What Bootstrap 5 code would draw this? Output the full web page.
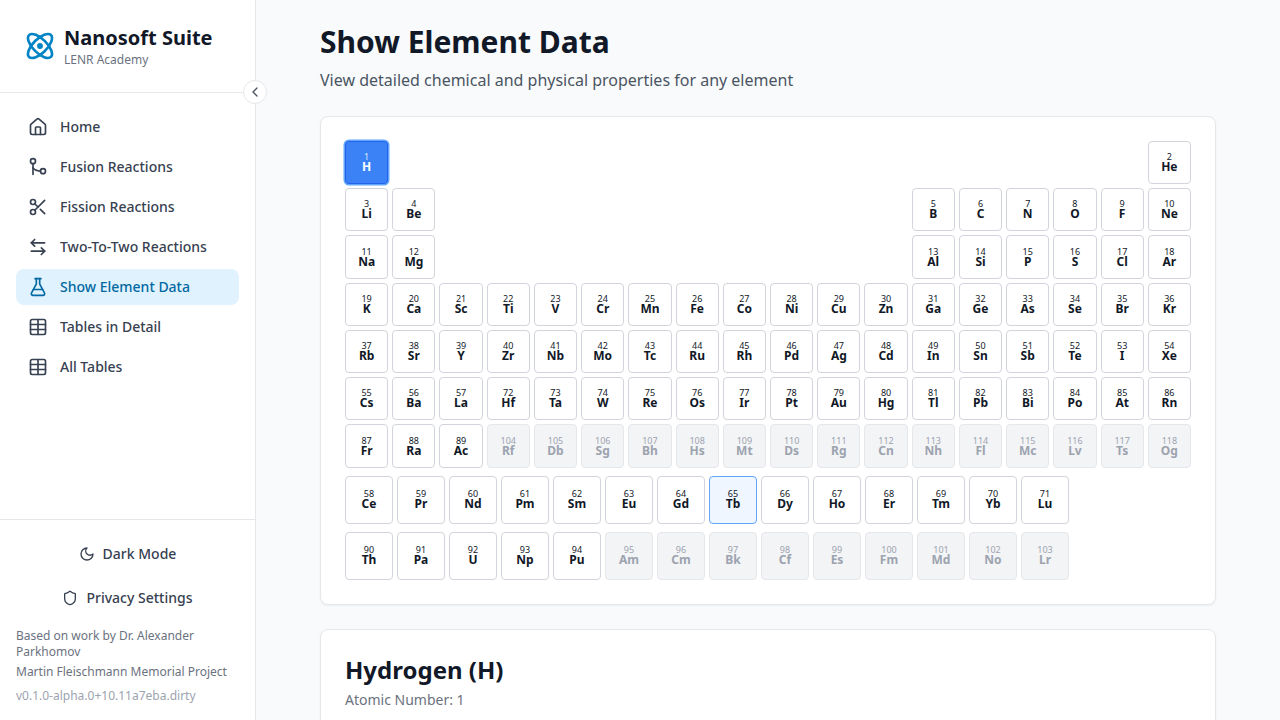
<!DOCTYPE html>
<html lang="en">
<head>
<meta charset="utf-8">
<title>Show Element Data</title>
<link href="https://cdn.jsdelivr.net/npm/bootstrap@5.3.0/dist/css/bootstrap.min.css" rel="stylesheet">
<style>
html,body{height:100%;overflow:hidden}
body{font-family:"Noto Sans",sans-serif;background:#f9fafb;color:#111827}
.shell{height:720px;overflow:hidden}
.side{width:256px;flex:none;height:720px;background:#fff;border-right:1px solid #e5e7eb;position:relative}
.brand{height:93px;padding:0 24px;border-bottom:1px solid #e5e7eb;gap:8px}
.brand svg{width:32px;height:32px;color:#0284c7}
.brand-name{font-size:20px;font-weight:700;line-height:28px;color:#111827}
.brand-sub{font-size:12px;line-height:16px;color:#6b7280}
.collapse-btn{position:absolute;right:-12px;top:80px;width:24px;height:24px;border-radius:50%;background:#fff;border:1px solid #e5e7eb;color:#4b5563;padding:0;display:flex;align-items:center;justify-content:center}
.collapse-btn svg{width:16px;height:16px}
.side-nav{padding:16px 16px 0;gap:4px}
.side-link{height:36px;padding:0 12px 1px;gap:12px;border-radius:8px;font-size:14px;line-height:20px;font-weight:500;color:#374151;text-decoration:none;display:flex;align-items:center}
.side-link svg{width:20px;height:20px;flex:none;position:relative;top:.5px}
.side-link.on{background:#e0f2fe;color:#0369a1}
.side-foot{border-top:1px solid #e5e7eb;padding:12px 16px 0;margin-top:auto;height:201px}
.foot-btn{height:44px;gap:8px;font-size:14px;line-height:20px;font-weight:500;color:#374151;background:none;border:0;width:100%;display:flex;align-items:center;justify-content:center;padding:0 0 1px}
.foot-btn svg{width:16px;height:16px}
.credits{font-size:12px;line-height:16px;color:#6b7280;margin-top:8px}
.credits p{margin:0 0 4px}
.credits p.ver{color:#9ca3af;margin-top:8px}
.main-pane{flex:1;padding:24px 64px 0;min-width:0}
.page-h{font-size:30px;line-height:36px;font-weight:700;color:#111827;margin:0 0 8px}
.page-s{font-size:16px;line-height:24px;color:#4b5563;margin:0 0 24px}
.panel{background:#fff;border:1px solid #e5e7eb;border-radius:8px;padding:24px;box-shadow:0 1px 2px rgba(0,0,0,.05);margin-bottom:24px}
.pt-grid{display:grid;grid-template-columns:repeat(18,1fr);gap:4px}
.fb-grid{display:grid;grid-template-columns:repeat(15,48px);gap:8px 4px;margin-top:8px}
.el{aspect-ratio:1;padding:0;background:#fff;border:1px solid #d1d5db;border-radius:4px;color:#111827;display:flex;flex-direction:column;align-items:center;justify-content:center;min-width:0}
.el i{font-style:normal;font-size:9px;line-height:9px;font-weight:400}
.el b{font-size:12px;line-height:12px;font-weight:700}
.el.off{background:#f3f4f6;border-color:#e5e7eb;color:#9ca3af}
.el.sel{background:#3b82f6;border-color:#2563eb;color:#fff;box-shadow:0 0 0 1.5px #60a5fa}
.el.sel i{color:#dbeafe}
.el.hov{background:#eff6ff;border-color:#60a5fa}
.s13{grid-column-start:13}.s18{grid-column-start:18}
.det-h{font-size:24px;line-height:32px;font-weight:700;color:#111827;margin:0 0 4px}
.det-s{font-size:14px;line-height:20px;color:#6b7280;margin:0}
</style>
</head>
<body>
<div class="shell d-flex">
<aside class="side d-flex flex-column">
<div class="brand d-flex align-items-center">
<svg viewBox="0 0 24 24" fill="none" stroke="currentColor" stroke-width="2" stroke-linecap="round" stroke-linejoin="round"><circle cx="12" cy="12" r="1.2" fill="currentColor"/><path d="M20.2 20.2c2.04-2.03.02-7.36-4.5-11.9-4.54-4.52-9.87-6.54-11.9-4.5-2.04 2.03-.02 7.36 4.5 11.9 4.54 4.52 9.87 6.54 11.9 4.5Z"/><path d="M15.7 15.7c4.52-4.54 6.54-9.87 4.5-11.9-2.03-2.04-7.36-.02-11.9 4.5-4.52 4.54-6.54 9.87-4.5 11.9 2.03 2.04 7.36.02 11.9-4.5Z"/></svg>
<div><div class="brand-name">Nanosoft Suite</div><div class="brand-sub">LENR Academy</div></div>
</div>
<button class="collapse-btn" type="button" aria-label="Collapse"><svg viewBox="0 0 24 24" fill="none" stroke="currentColor" stroke-width="2" stroke-linecap="round" stroke-linejoin="round"><path d="m15 18-6-6 6-6"/></svg></button>
<nav class="side-nav d-flex flex-column">
<a class="side-link" href="#"><svg viewBox="0 0 24 24" fill="none" stroke="currentColor" stroke-width="2" stroke-linecap="round" stroke-linejoin="round"><path d="M15 21v-8a1 1 0 0 0-1-1h-4a1 1 0 0 0-1 1v8"/><path d="M3 10a2 2 0 0 1 .709-1.528l7-5.999a2 2 0 0 1 2.582 0l7 5.999A2 2 0 0 1 21 10v9a2 2 0 0 1-2 2H5a2 2 0 0 1-2-2z"/></svg>Home</a>
<a class="side-link" href="#"><svg viewBox="0 0 24 24" fill="none" stroke="currentColor" stroke-width="2" stroke-linecap="round" stroke-linejoin="round"><circle cx="6" cy="5" r="3"/><circle cx="18" cy="17" r="3"/><path d="M6 8v13"/><path d="M6 13c1.5 2.5 5 3.5 9 4"/></svg>Fusion Reactions</a>
<a class="side-link" href="#"><svg viewBox="0 0 24 24" fill="none" stroke="currentColor" stroke-width="2" stroke-linecap="round" stroke-linejoin="round"><circle cx="6" cy="6" r="3"/><path d="M8.12 8.12 12 12"/><path d="M20 4 8.12 15.88"/><circle cx="6" cy="18" r="3"/><path d="M14.8 14.8 20 20"/></svg>Fission Reactions</a>
<a class="side-link" href="#"><svg viewBox="0 0 24 24" fill="none" stroke="currentColor" stroke-width="2" stroke-linecap="round" stroke-linejoin="round"><path d="M8 3 4 7l4 4"/><path d="M4 7h16"/><path d="m16 21 4-4-4-4"/><path d="M20 17H4"/></svg>Two-To-Two Reactions</a>
<a class="side-link on" href="#"><svg viewBox="0 0 24 24" fill="none" stroke="currentColor" stroke-width="2" stroke-linecap="round" stroke-linejoin="round"><path d="M14 2v6a2 2 0 0 0 .245.96l5.51 10.08A2 2 0 0 1 18 22H6a2 2 0 0 1-1.755-2.96l5.51-10.08A2 2 0 0 0 10 8V2"/><path d="M6.453 15h11.094"/><path d="M8.5 2h7"/></svg>Show Element Data</a>
<a class="side-link" href="#"><svg viewBox="0 0 24 24" fill="none" stroke="currentColor" stroke-width="2" stroke-linecap="round" stroke-linejoin="round"><path d="M12 3v18"/><rect x="3" y="3" width="18" height="18" rx="2"/><path d="M3 9h18"/><path d="M3 15h18"/></svg>Tables in Detail</a>
<a class="side-link" href="#"><svg viewBox="0 0 24 24" fill="none" stroke="currentColor" stroke-width="2" stroke-linecap="round" stroke-linejoin="round"><path d="M12 3v18"/><rect x="3" y="3" width="18" height="18" rx="2"/><path d="M3 9h18"/><path d="M3 15h18"/></svg>All Tables</a>
</nav>
<div class="side-foot">
<button class="foot-btn" type="button"><svg viewBox="0 0 24 24" fill="none" stroke="currentColor" stroke-width="2" stroke-linecap="round" stroke-linejoin="round"><path d="M12 3a6 6 0 0 0 9 9 9 9 0 1 1-9-9Z"/></svg>Dark Mode</button>
<button class="foot-btn" type="button"><svg viewBox="0 0 24 24" fill="none" stroke="currentColor" stroke-width="2" stroke-linecap="round" stroke-linejoin="round"><path d="M20 13c0 5-3.5 7.5-7.66 8.95a1 1 0 0 1-.67-.01C7.5 20.5 4 18 4 13V6a1 1 0 0 1 1-1c2 0 4.5-1.2 6.24-2.72a1.17 1.17 0 0 1 1.52 0C14.51 3.81 17 5 19 5a1 1 0 0 1 1 1z"/></svg>Privacy Settings</button>
<div class="credits"><p>Based on work by Dr. Alexander Parkhomov</p><p>Martin Fleischmann Memorial Project</p><p class="ver">v0.1.0-alpha.0+10.11a7eba.dirty</p></div>
</div>
</aside>
<main class="main-pane">
<h1 class="page-h">Show Element Data</h1>
<p class="page-s">View detailed chemical and physical properties for any element</p>
<section class="panel">
<div class="pt-grid">
<button class="el sel"><i>1</i><b>H</b></button><button class="el s18"><i>2</i><b>He</b></button>
<button class="el"><i>3</i><b>Li</b></button><button class="el"><i>4</i><b>Be</b></button><button class="el s13"><i>5</i><b>B</b></button><button class="el"><i>6</i><b>C</b></button><button class="el"><i>7</i><b>N</b></button><button class="el"><i>8</i><b>O</b></button><button class="el"><i>9</i><b>F</b></button><button class="el"><i>10</i><b>Ne</b></button>
<button class="el"><i>11</i><b>Na</b></button><button class="el"><i>12</i><b>Mg</b></button><button class="el s13"><i>13</i><b>Al</b></button><button class="el"><i>14</i><b>Si</b></button><button class="el"><i>15</i><b>P</b></button><button class="el"><i>16</i><b>S</b></button><button class="el"><i>17</i><b>Cl</b></button><button class="el"><i>18</i><b>Ar</b></button>
<button class="el"><i>19</i><b>K</b></button><button class="el"><i>20</i><b>Ca</b></button><button class="el"><i>21</i><b>Sc</b></button><button class="el"><i>22</i><b>Ti</b></button><button class="el"><i>23</i><b>V</b></button><button class="el"><i>24</i><b>Cr</b></button><button class="el"><i>25</i><b>Mn</b></button><button class="el"><i>26</i><b>Fe</b></button><button class="el"><i>27</i><b>Co</b></button><button class="el"><i>28</i><b>Ni</b></button><button class="el"><i>29</i><b>Cu</b></button><button class="el"><i>30</i><b>Zn</b></button><button class="el"><i>31</i><b>Ga</b></button><button class="el"><i>32</i><b>Ge</b></button><button class="el"><i>33</i><b>As</b></button><button class="el"><i>34</i><b>Se</b></button><button class="el"><i>35</i><b>Br</b></button><button class="el"><i>36</i><b>Kr</b></button>
<button class="el"><i>37</i><b>Rb</b></button><button class="el"><i>38</i><b>Sr</b></button><button class="el"><i>39</i><b>Y</b></button><button class="el"><i>40</i><b>Zr</b></button><button class="el"><i>41</i><b>Nb</b></button><button class="el"><i>42</i><b>Mo</b></button><button class="el"><i>43</i><b>Tc</b></button><button class="el"><i>44</i><b>Ru</b></button><button class="el"><i>45</i><b>Rh</b></button><button class="el"><i>46</i><b>Pd</b></button><button class="el"><i>47</i><b>Ag</b></button><button class="el"><i>48</i><b>Cd</b></button><button class="el"><i>49</i><b>In</b></button><button class="el"><i>50</i><b>Sn</b></button><button class="el"><i>51</i><b>Sb</b></button><button class="el"><i>52</i><b>Te</b></button><button class="el"><i>53</i><b>I</b></button><button class="el"><i>54</i><b>Xe</b></button>
<button class="el"><i>55</i><b>Cs</b></button><button class="el"><i>56</i><b>Ba</b></button><button class="el"><i>57</i><b>La</b></button><button class="el"><i>72</i><b>Hf</b></button><button class="el"><i>73</i><b>Ta</b></button><button class="el"><i>74</i><b>W</b></button><button class="el"><i>75</i><b>Re</b></button><button class="el"><i>76</i><b>Os</b></button><button class="el"><i>77</i><b>Ir</b></button><button class="el"><i>78</i><b>Pt</b></button><button class="el"><i>79</i><b>Au</b></button><button class="el"><i>80</i><b>Hg</b></button><button class="el"><i>81</i><b>Tl</b></button><button class="el"><i>82</i><b>Pb</b></button><button class="el"><i>83</i><b>Bi</b></button><button class="el"><i>84</i><b>Po</b></button><button class="el"><i>85</i><b>At</b></button><button class="el"><i>86</i><b>Rn</b></button>
<button class="el"><i>87</i><b>Fr</b></button><button class="el"><i>88</i><b>Ra</b></button><button class="el"><i>89</i><b>Ac</b></button><button class="el off"><i>104</i><b>Rf</b></button><button class="el off"><i>105</i><b>Db</b></button><button class="el off"><i>106</i><b>Sg</b></button><button class="el off"><i>107</i><b>Bh</b></button><button class="el off"><i>108</i><b>Hs</b></button><button class="el off"><i>109</i><b>Mt</b></button><button class="el off"><i>110</i><b>Ds</b></button><button class="el off"><i>111</i><b>Rg</b></button><button class="el off"><i>112</i><b>Cn</b></button><button class="el off"><i>113</i><b>Nh</b></button><button class="el off"><i>114</i><b>Fl</b></button><button class="el off"><i>115</i><b>Mc</b></button><button class="el off"><i>116</i><b>Lv</b></button><button class="el off"><i>117</i><b>Ts</b></button><button class="el off"><i>118</i><b>Og</b></button>
</div>
<div class="fb-grid">
<button class="el"><i>58</i><b>Ce</b></button><button class="el"><i>59</i><b>Pr</b></button><button class="el"><i>60</i><b>Nd</b></button><button class="el"><i>61</i><b>Pm</b></button><button class="el"><i>62</i><b>Sm</b></button><button class="el"><i>63</i><b>Eu</b></button><button class="el"><i>64</i><b>Gd</b></button><button class="el hov"><i>65</i><b>Tb</b></button><button class="el"><i>66</i><b>Dy</b></button><button class="el"><i>67</i><b>Ho</b></button><button class="el"><i>68</i><b>Er</b></button><button class="el"><i>69</i><b>Tm</b></button><button class="el"><i>70</i><b>Yb</b></button><button class="el"><i>71</i><b>Lu</b></button><div></div>
<button class="el"><i>90</i><b>Th</b></button><button class="el"><i>91</i><b>Pa</b></button><button class="el"><i>92</i><b>U</b></button><button class="el"><i>93</i><b>Np</b></button><button class="el"><i>94</i><b>Pu</b></button><button class="el off"><i>95</i><b>Am</b></button><button class="el off"><i>96</i><b>Cm</b></button><button class="el off"><i>97</i><b>Bk</b></button><button class="el off"><i>98</i><b>Cf</b></button><button class="el off"><i>99</i><b>Es</b></button><button class="el off"><i>100</i><b>Fm</b></button><button class="el off"><i>101</i><b>Md</b></button><button class="el off"><i>102</i><b>No</b></button><button class="el off"><i>103</i><b>Lr</b></button>
</div>
</section>
<section class="panel">
<h2 class="det-h">Hydrogen (H)</h2>
<p class="det-s">Atomic Number: 1</p>
</section>
</main>
</div>
</body>
</html>
